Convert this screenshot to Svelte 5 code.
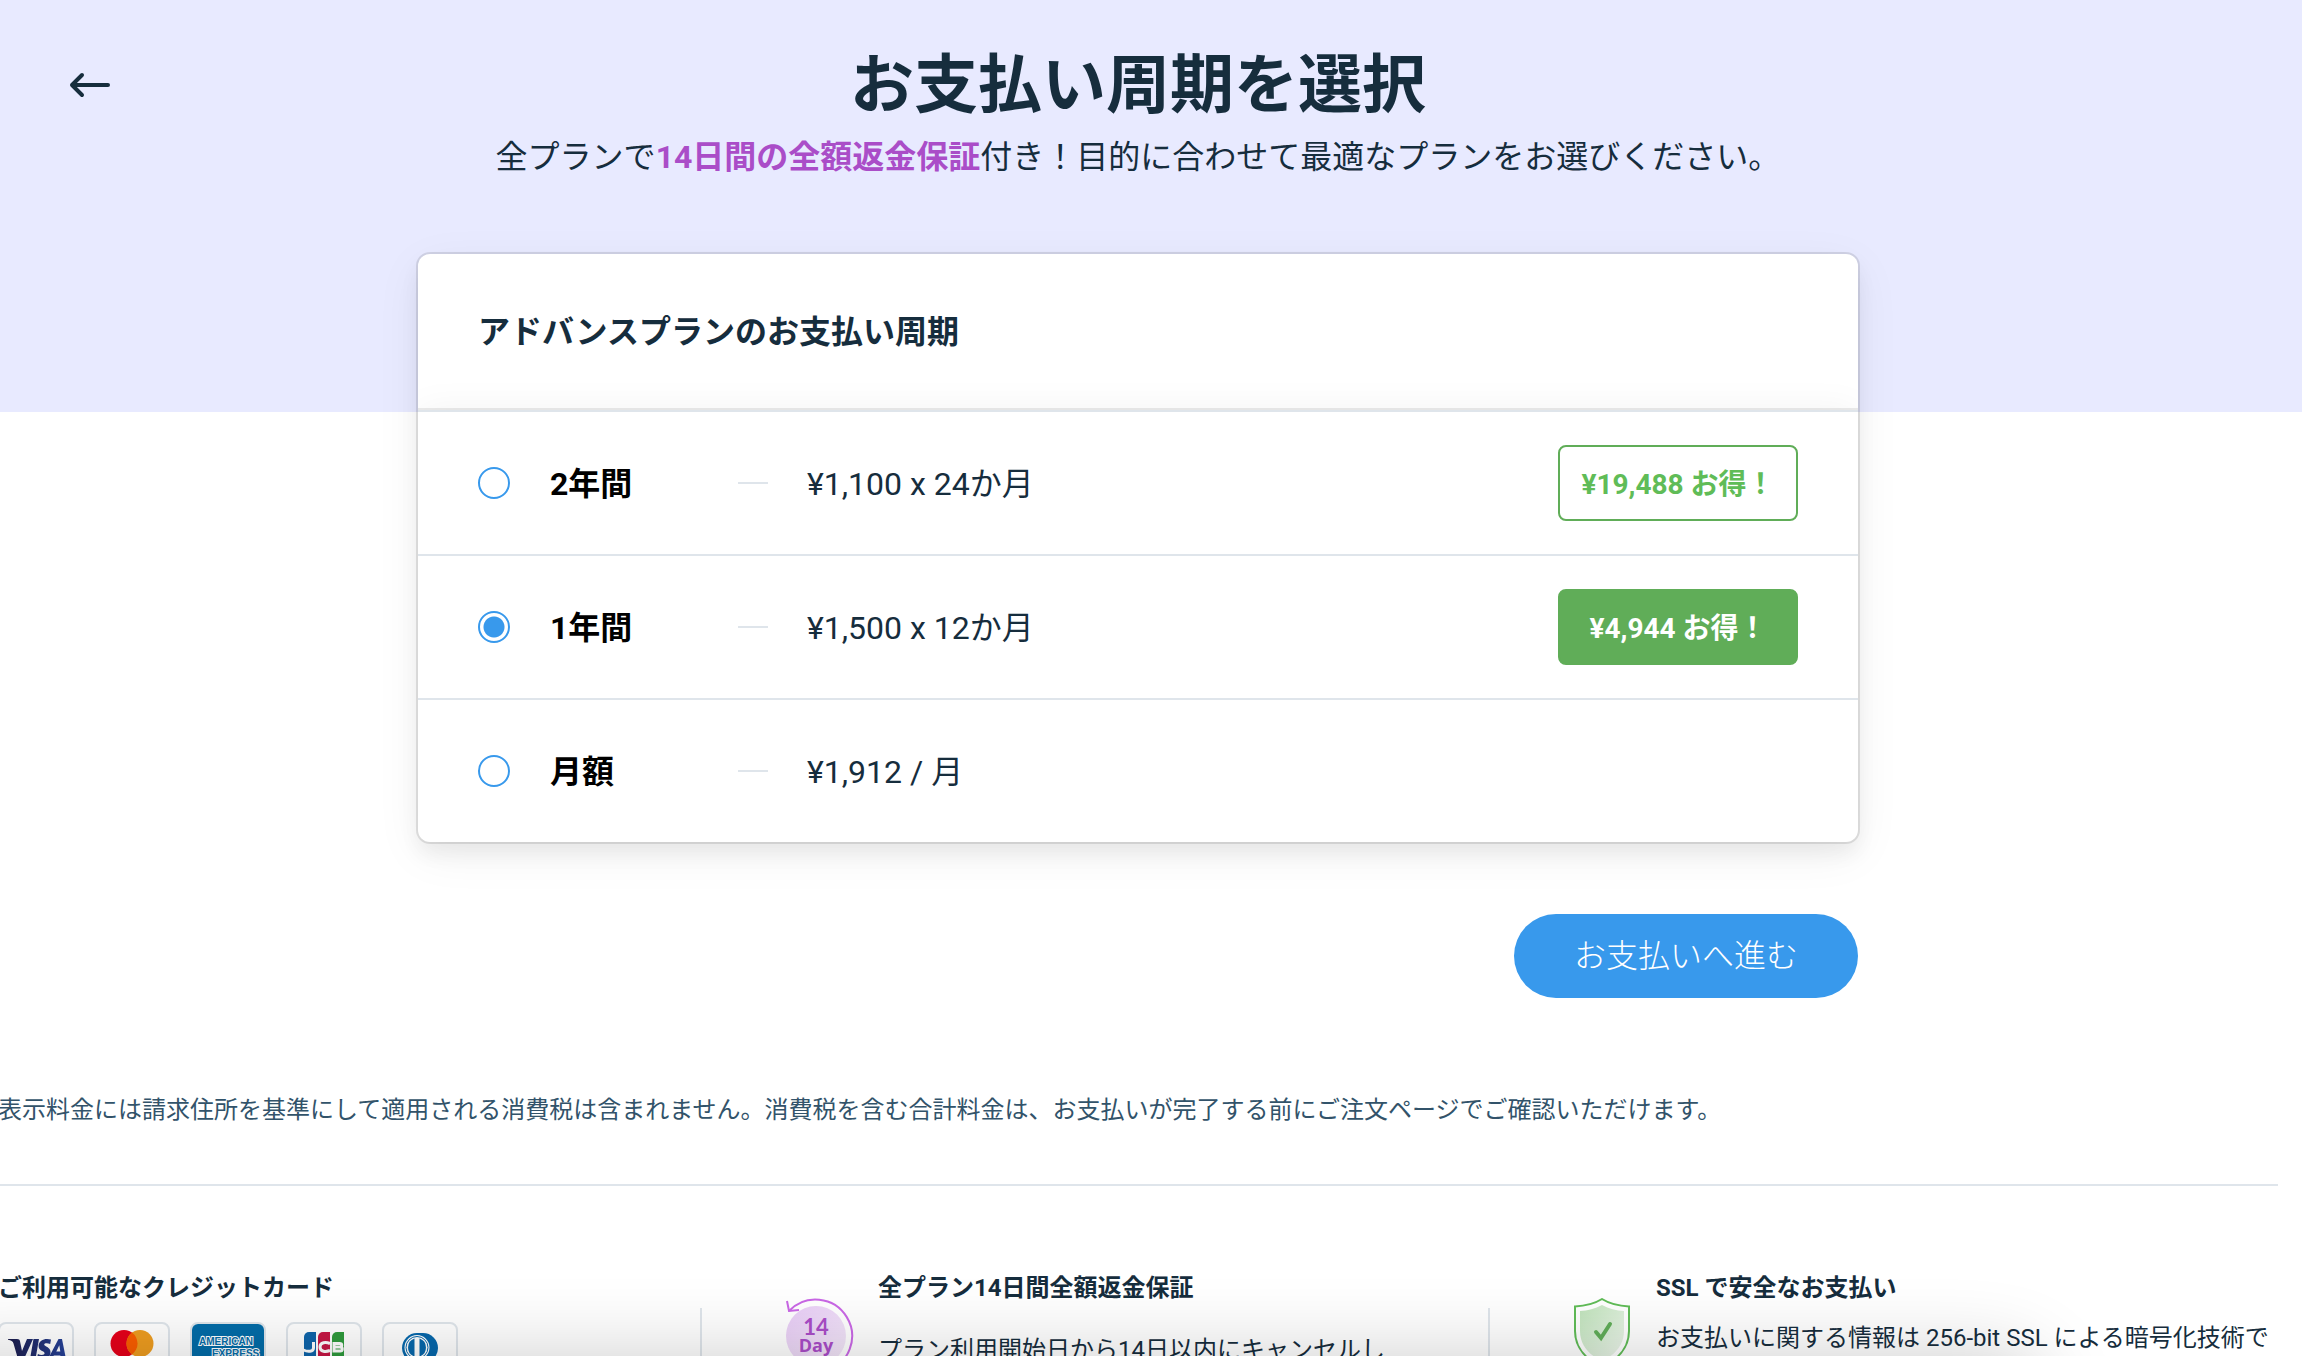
<script>
  let selected = $state('y1');

  const cycles = [
    { id: 'y2', label: '2年間', price: '¥1,100 x 24か月', saving: '¥19,488 お得！' },
    { id: 'y1', label: '1年間', price: '¥1,500 x 12か月', saving: '¥4,944 お得！' },
    { id: 'm1', label: '月額', price: '¥1,912 / 月', saving: '' }
  ];
</script>

<div class="page">
  <div class="hero">
    <button class="back" aria-label="戻る">
      <svg width="42" height="28" viewBox="0 0 42 28" fill="none" stroke="#162d3d" stroke-width="4" stroke-linecap="round" stroke-linejoin="round">
        <path d="M13 4 3 14l10 10M3 14h36" />
      </svg>
    </button>
    <div class="intro">
      <h1>お支払い周期を選択</h1>
      <p>全プランで<strong>14日間の全額返金保証</strong>付き！目的に合わせて最適なプランをお選びください。</p>
    </div>
  </div>

  <div class="content">
    <form class="checkout" onsubmit={(e) => e.preventDefault()}>
      <section class="card">
        <h2>アドバンスプランのお支払い周期</h2>
        <div class="options">
          {#each cycles as c (c.id)}
            <label class="option">
              <input type="radio" name="cycle" value={c.id} bind:group={selected} />
              <span class="name">{c.label}</span>
              <span class="dash"></span>
              <span class="price">{c.price}</span>
              {#if c.saving}
                <span class="badge" class:filled={selected === c.id}>{c.saving}</span>
              {/if}
            </label>
          {/each}
        </div>
      </section>
      <button class="submit" type="submit">お支払いへ進む</button>
    </form>

    <p class="note">表示料金には請求住所を基準にして適用される消費税は含まれません。消費税を含む合計料金は、お支払いが完了する前にご注文ページでご確認いただけます。</p>

    <footer>
      <section class="col">
        <h3>ご利用可能なクレジットカード</h3>
        <ul class="cards">
          <li>
            <svg viewBox="0 0 72 48" role="img" aria-label="VISA">
              <defs>
                <linearGradient id="visa" x1="0" x2="1">
                  <stop offset="0" stop-color="#1d1d4b" />
                  <stop offset="1" stop-color="#26429a" />
                </linearGradient>
              </defs>
              <path fill="url(#visa)" d="M8 15h9c2 0 2.700.8 3 2.200l2 9.800 5-12h6l-9 20h-6l-4.500-15.500C13 17.500 11 16.400 8 15.800zM33.500 15H39L35.500 35H30zM51 15.600l-.8 4.400c-2.500-1-6-1-6 .6 0 2 6.300 2.400 6.300 7.400 0 7-8.500 8.300-13.500 6.500l.9-4.500c2.500 1.300 6.700 1.400 6.700-.8 0-2.200-6-2.200-6-7.200 0-6.500 7.500-8.200 12.400-6.400zM58.500 15H62l4 20h-5l-.7-3.600h-6.500L52.500 35H48zm.8 6.300-3 6.300h4z" />
            </svg>
          </li>
          <li>
            <svg viewBox="0 0 72 48" role="img" aria-label="Mastercard">
              <circle cx="28" cy="19.500" r="13.500" fill="#e6001a" />
              <circle cx="44" cy="19.500" r="13.500" fill="#ee9d20" />
              <path d="M36 8.600a13.500 13.500 0 0 1 0 21.800 13.500 13.500 0 0 1 0-21.800z" fill="#fb5e00" />
            </svg>
          </li>
          <li class="amex">
            <svg viewBox="0 0 72 48" role="img" aria-label="American Express">
              <rect width="72" height="48" fill="#036ca8" />
              <text x="7" y="21" class="amex-text">AMERICAN</text>
              <text x="20" y="33" class="amex-text">EXPRESS</text>
            </svg>
          </li>
          <li>
            <svg viewBox="0 0 72 48" role="img" aria-label="JCB">
              <path fill="#0f65ab" d="M16 13a5 5 0 0 1 5-5h7v30H16z" />
              <path fill="#c71745" d="M30 13a5 5 0 0 1 5-5h7v30H30z" />
              <path fill="#2f9b3c" d="M44 13a5 5 0 0 1 5-5h7v30H44z" />
              <path fill="none" stroke="#fff" stroke-width="3" d="M25.500 18v6c0 4-6 4-10 2M42 19.500c-4-1.500-10-1.500-10 3.500s6 5 10 3.500M46 19.500v7.500h6c3 0 3-4 0-4h-6 5.500c3 0 3-3.500 0-3.500z" />
            </svg>
          </li>
          <li>
            <svg viewBox="0 0 72 48" role="img" aria-label="Diners Club">
              <path fill="#0768ac" d="M33 9h6a15 15 0 0 1 0 30h-6a15 15 0 0 1 0-30z" />
              <circle cx="33" cy="23.500" r="12.500" fill="#fff" />
              <circle cx="33" cy="23.500" r="11" fill="none" stroke="#0768ac" stroke-width="1" />
              <path fill="#0768ac" d="M30.500 14.500a9.500 9.500 0 0 0 0 18zM35.500 14.500a9.500 9.500 0 0 1 0 18z" />
            </svg>
          </li>
        </ul>
      </section>

      <section class="col feature">
        <svg class="icon" width="72" height="76" viewBox="0 0 72 76" role="img" aria-label="14 Day">
          <defs>
            <linearGradient id="lilac" x1="0" y1="0" x2="1" y2="1">
              <stop offset="0" stop-color="#e8cbf6" />
              <stop offset="1" stop-color="#f4eaf9" />
            </linearGradient>
          </defs>
          <circle cx="32" cy="38" r="30" fill="url(#lilac)" />
          <path d="M5 13A36.500 36.500 0 1 1 42 73" fill="none" stroke="#ca68e6" stroke-width="2" />
          <path d="M3 3l2 10 10-1" fill="none" stroke="#ca68e6" stroke-width="2" />
          <text x="32" y="37" class="days number">14</text>
          <text x="32" y="54" class="days">Day</text>
        </svg>
        <div class="text">
          <h3>全プラン14日間全額返金保証</h3>
          <p class="late">プラン利用開始日から14日以内にキャンセルし</p>
        </div>
      </section>

      <section class="col feature ssl">
        <svg class="icon" width="56" height="70" viewBox="0 0 56 70" role="img" aria-label="SSL">
          <defs>
            <linearGradient id="mint" x1="0" y1="0" x2="1" y2="1">
              <stop offset="0" stop-color="#bfe3ba" />
              <stop offset="1" stop-color="#f0f7ef" />
            </linearGradient>
          </defs>
          <path d="M28 1C36 6 45 8 55 8.500V33c0 17-12 29-27 36C13 62 1 50 1 33V8.500C11 8 20 6 28 1z" fill="#fff" stroke="#60bc57" stroke-width="2" />
          <path d="M28 7c7 4 14 5.500 22 6v20c0 14-9 24-22 30C15 57 6 47 6 33V13c8-.5 15-2 22-6z" fill="url(#mint)" />
          <path d="m22 34 5 6 9-14" fill="none" stroke="#60ad58" stroke-width="4" stroke-linecap="round" />
        </svg>
        <div class="text">
          <h3>SSL で安全なお支払い</h3>
          <p>お支払いに関する情報は 256-bit SSL による暗号化技術で</p>
        </div>
      </section>
    </footer>
  </div>
</div>

<style>
  :global(body) {
    margin: 0;
    overflow: hidden;
    background: #fff;
  }
  .page {
    position: relative;
    height: 100vh;
    overflow: hidden;
    font-family: Roboto, 'Noto Sans CJK JP', sans-serif;
    color: #162d3d;
  }
  .page::after {
    content: '';
    position: absolute;
    left: -80px;
    right: 260px;
    top: 100%;
    height: 120px;
    border-radius: 40px;
    box-shadow: 0 0 80px rgba(0, 0, 0, 0.2);
    pointer-events: none;
  }
  h1, h2, h3, p, ul { margin: 0; padding: 0; }
  .hero {
    display: flex;
    align-items: flex-start;
    height: 412px;
    padding-right: 26px;
    background: #e8eaff;
    box-sizing: border-box;
  }
  .back {
    width: 42px;
    height: 28px;
    margin: 71px -111px 0 69px;
    padding: 0;
    border: 0;
    background: none;
    cursor: pointer;
  }
  .back svg { display: block; }
  .intro {
    flex: 1;
    padding-top: 38px;
    text-align: center;
  }
  h1 {
    font-size: 64px;
    line-height: 96px;
    font-weight: 700;
  }
  .intro p {
    font-size: 32px;
    line-height: 46px;
  }
  strong { color: #aa4dc8; }
  .content {
    margin: -158px 24px 0 -2px;
  }
  .checkout {
    display: flex;
    flex-direction: column;
    align-items: flex-end;
    gap: 72px;
    max-width: 1440px;
    margin: 0 auto;
  }
  .card {
    width: 100%;
    border-radius: 12px;
    background: #fff;
    overflow: hidden;
    box-shadow: 0 0 0 2px rgba(0, 0, 0, 0.1), 0 12px 48px rgba(0, 0, 0, 0.06), 0 12px 20px rgba(0, 0, 0, 0.06);
  }
  h2 {
    padding: 54px 60px;
    font-size: 32px;
    line-height: 48px;
    font-weight: 700;
  }
  .options {
    box-shadow: 0 0 0 2px rgba(0, 0, 0, 0.08), 0 0 36px rgba(0, 0, 0, 0.05);
  }
  .option {
    display: flex;
    align-items: center;
    box-sizing: border-box;
    height: 144px;
    padding: 0 60px;
    border-top: 2px solid #dfe5eb;
    font-size: 32px;
    line-height: 48px;
    cursor: pointer;
  }
  input {
    appearance: none;
    width: 32px;
    height: 32px;
    margin: 0 40px 0 0;
    border: 2px solid #3899ec;
    border-radius: 50%;
    background: #fff;
  }
  input:checked {
    background: radial-gradient(circle, #3899ec 10px, #fff 11px);
  }
  .name {
    width: 188px;
    padding-top: 2px;
    font-weight: 700;
    color: #000;
  }
  .price { padding-top: 2px; }
  .dash {
    width: 30px;
    height: 2px;
    margin-right: 39px;
    background: #dfe5eb;
  }
  .badge {
    display: flex;
    align-items: center;
    justify-content: center;
    box-sizing: border-box;
    width: 240px;
    height: 76px;
    margin-left: auto;
    padding-top: 4px;
    border: 2px solid #60ad58;
    border-radius: 8px;
    font-size: 28px;
    font-weight: 700;
    color: #60bc57;
  }
  .badge.filled {
    background: #60ad58;
    color: #fff;
  }
  .submit {
    height: 84px;
    padding: 0 60px;
    border: 0;
    border-radius: 42px;
    background: #3899ec;
    color: #fff;
    font: 300 32px/48px Roboto, 'Noto Sans CJK JP', sans-serif;
    cursor: pointer;
  }
  .note {
    padding: 94px 0 56px;
    border-bottom: 2px solid #dfe5eb;
    font-size: 24px;
    line-height: 36px;
    color: #32536a;
  }
  footer {
    display: grid;
    grid-template-columns: 702px 788px 1fr;
    padding-top: 84px;
    white-space: nowrap;
  }
  h3 {
    font-size: 24px;
    line-height: 36px;
    font-weight: 700;
  }
  footer p {
    font-size: 24px;
    line-height: 36px;
    padding-top: 14px;
  }
  footer p.late { padding-top: 26px; }
  .cards {
    display: flex;
    gap: 20px;
    padding-top: 16px;
    list-style: none;
  }
  .cards li {
    width: 72px;
    height: 48px;
    border: 2px solid #dfe5eb;
    border-radius: 8px;
    overflow: hidden;
  }
  .cards svg { display: block; }
  .amex-text {
    font: 700 10px 'Liberation Sans', sans-serif;
    fill: #036ca8;
    stroke: #fff;
    stroke-width: 2px;
    paint-order: stroke;
  }
  .feature {
    display: flex;
  }
  .feature::before {
    content: '';
    width: 2px;
    height: 80px;
    margin-top: 38px;
    background: #dfe5eb;
  }
  .icon {
    margin: 28px 22px 0 82px;
    flex: none;
  }
  .ssl .icon { margin: 28px 26px 0 84px; }
  .days {
    font: 700 18px 'Open Sans', sans-serif;
    text-anchor: middle;
    fill: #aa4dc8;
  }
  .days.number {
    font: 700 22px Lato, sans-serif;
  }
</style>
